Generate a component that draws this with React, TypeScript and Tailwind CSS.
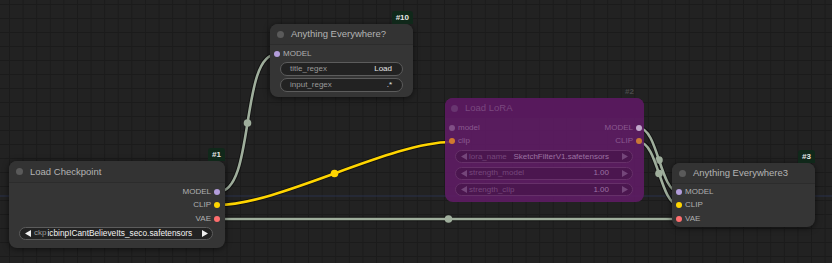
import React from 'react';

type Pt = [number, number];

const LINK = '#9fae9c';

// litegraph style spline: horizontal tangents, a quarter of the distance long
function spline(a: Pt, b: Pt) {
  const d = Math.hypot(b[0] - a[0], b[1] - a[1]) * 0.25;
  const c1: Pt = [a[0] + d, a[1]];
  const c2: Pt = [b[0] - d, b[1]];
  const mid: Pt = [
    (a[0] + 3 * c1[0] + 3 * c2[0] + b[0]) / 8,
    (a[1] + 3 * c1[1] + 3 * c2[1] + b[1]) / 8,
  ];
  return { d: `M${a[0]} ${a[1]} C${c1[0]} ${c1[1]} ${c2[0]} ${c2[1]} ${b[0]} ${b[1]}`, mid };
}

const links: { a: Pt; b: Pt; color: string }[] = [
  { a: [218, 192], b: [277, 54], color: LINK },
  { a: [218, 205], b: [451, 142], color: '#ffd500' },
  { a: [218, 219], b: [679, 219], color: LINK },
  { a: [639, 128], b: [679, 192], color: LINK },
  { a: [639, 142], b: [679, 205], color: LINK },
];

function Links() {
  return (
    <svg className="absolute inset-0" width={832} height={263}>
      <line x1={0} y1={196} x2={832} y2={196} stroke="#29304a" strokeWidth={1} />
      {links.map((l, i) => {
        const s = spline(l.a, l.b);
        return (
          <g key={i}>
            <path d={s.d} fill="none" stroke="rgba(0,0,0,0.45)" strokeWidth={4.5} />
            <path d={s.d} fill="none" stroke={l.color} strokeWidth={2.6} />
            <circle cx={s.mid[0]} cy={s.mid[1]} r={3.8} fill={l.color} />
          </g>
        );
      })}
    </svg>
  );
}

function Badge({ label }: { label: string }) {
  return (
    <div className="absolute right-0 bottom-full flex h-[13px] items-center rounded-t-[3px] bg-[#10281a] px-[4px] text-[8px] font-bold text-[#e6e6e6]">
      {label}
    </div>
  );
}

function Arrow({ dir, dim }: { dir: 'l' | 'r'; dim?: boolean }) {
  return (
    <svg width={6} height={7} viewBox="0 0 6 7" className="shrink-0">
      <polygon points={dir === 'l' ? '6,0 6,7 0,3.5' : '0,0 0,7 6,3.5'} fill={dim ? '#74467a' : '#f0f0f0'} />
    </svg>
  );
}

function Dot({ color }: { color: string }) {
  return <span className="h-[6px] w-[6px] shrink-0 rounded-full" style={{ backgroundColor: color }} />;
}

function TextWidget({ label, value }: { label: string; value: string }) {
  return (
    <div className="flex h-[14px] items-center justify-between rounded-full border border-[#5c5c5c] bg-[#222] pl-[9px] pr-[10px] text-[8px]">
      <span className="text-[#9a9a9a]">{label}</span>
      <span className="text-[#e4e4e4]">{value}</span>
    </div>
  );
}

function LoraWidget({ label, value }: { label: string; value: string }) {
  return (
    <div className="flex h-[13px] items-center rounded-full border border-[#663069] bg-[#4a164e]/90 pl-[5px] pr-[4px] text-[8px]">
      <Arrow dir="l" dim />
      <span className="ml-[2px] text-[#76477c]">{label}</span>
      <span className="ml-auto mr-[13px] text-[#9c72a2]">{value}</span>
      <Arrow dir="r" dim />
    </div>
  );
}

function LoadCheckpoint() {
  return (
    <div className="absolute left-[9px] top-[161px] h-[87px] w-[216px] rounded-[8px] bg-[#353535] shadow-[0_1px_6px_rgba(0,0,0,0.6)]">
      <Badge label="#1" />
      <div className="flex h-[22px] items-center gap-[7px] rounded-t-[8px] border-b border-[#2c2c2c] bg-[#333] pl-[7px]">
        <span className="h-[7px] w-[7px] rounded-full bg-[#5a5a5a]" />
        <span className="text-[9.5px] text-[#b4b4b4]">Load Checkpoint</span>
      </div>
      <div className="flex flex-col items-end pr-[5px] pt-[2px] text-[8px] text-[#b0b0b0]">
        <div className="flex h-[13.5px] items-center gap-[3px]">
          MODEL <Dot color="#b39ddb" />
        </div>
        <div className="flex h-[13.5px] items-center gap-[3px]">
          CLIP <Dot color="#ffd500" />
        </div>
        <div className="flex h-[13.5px] items-center gap-[3px]">
          VAE <Dot color="#ff6e6e" />
        </div>
      </div>
      <div className="ml-[10px] mr-[12px] mt-[1px] flex h-[13px] items-center rounded-full border border-[#5c5c5c] bg-[#222] pl-[5px] pr-[4px] text-[8px]">
        <Arrow dir="l" />
        <span className="ml-[3px] text-[#9a9a9a]">ckp</span>
        <span className="ml-[1px] text-[8.3px] text-[#f2f2f2]">icbinpICantBelieveIts_seco.safetensors</span>
        <span className="flex-1" />
        <Arrow dir="r" />
      </div>
    </div>
  );
}

function AnythingEverywhereQ() {
  return (
    <div className="absolute left-[270px] top-[24px] h-[73px] w-[143px] rounded-[8px] bg-[#353535] shadow-[0_1px_6px_rgba(0,0,0,0.6)]">
      <Badge label="#10" />
      <div className="flex h-[21px] items-center gap-[7px] rounded-t-[8px] border-b border-[#2c2c2c] bg-[#333] pl-[7px]">
        <span className="h-[7px] w-[7px] rounded-full bg-[#5a5a5a]" />
        <span className="text-[9.5px] text-[#b4b4b4]">Anything Everywhere?</span>
      </div>
      <div className="flex flex-col pl-[4px] pt-[2px] text-[8px] text-[#b0b0b0]">
        <div className="flex h-[13.5px] items-center gap-[3px]">
          <Dot color="#b39ddb" /> MODEL
        </div>
      </div>
      <div className="mx-[10px] mt-[1.5px] flex flex-col gap-[2px]">
        <TextWidget label="title_regex" value="Load" />
        <TextWidget label="input_regex" value=".*" />
      </div>
    </div>
  );
}

function LoadLora() {
  return (
    <div className="absolute left-[445px] top-[98px] h-[104px] w-[199px] rounded-[8px] bg-[rgba(94,28,100,0.9)]">
      <div className="absolute right-[10px] bottom-full pb-[2px] text-[8px] font-bold text-[#4a4a4a]">#2</div>
      <div className="flex h-[20px] items-center gap-[7px] rounded-t-[8px] bg-[rgba(88,26,92,0.9)] pl-[6px]">
        <span className="h-[7px] w-[7px] rounded-full bg-[#683570]" />
        <span className="text-[9.5px] text-[#7a487f]">Load LoRA</span>
      </div>
      <div className="flex flex-col pl-[4px] pr-[2px] pt-[3px] text-[8px] text-[#8a5a90]">
        <div className="flex h-[13.5px] items-center justify-between">
          <span className="flex items-center gap-[3px]">
            <Dot color="#804f86" /> model
          </span>
          <span className="flex items-center gap-[3px]">
            MODEL <Dot color="#c2a9cc" />
          </span>
        </div>
        <div className="flex h-[13.5px] items-center justify-between">
          <span className="flex items-center gap-[3px]">
            <Dot color="#d07a2e" /> clip
          </span>
          <span className="flex items-center gap-[3px]">
            CLIP <Dot color="#c97936" />
          </span>
        </div>
      </div>
      <div className="ml-[10px] mr-[11px] mt-[2px] flex flex-col gap-[3.5px]">
        <LoraWidget label="lora_name" value="SketchFilterV1.safetensors" />
        <LoraWidget label="strength_model" value="1.00" />
        <LoraWidget label="strength_clip" value="1.00" />
      </div>
    </div>
  );
}

function AnythingEverywhere3() {
  return (
    <div className="absolute left-[672px] top-[163px] h-[64px] w-[143px] rounded-[8px] bg-[#353535] shadow-[0_1px_6px_rgba(0,0,0,0.6)]">
      <Badge label="#3" />
      <div className="flex h-[21px] items-center gap-[7px] rounded-t-[8px] border-b border-[#2c2c2c] bg-[#333] pl-[7px]">
        <span className="h-[7px] w-[7px] rounded-full bg-[#5a5a5a]" />
        <span className="text-[9.5px] text-[#b4b4b4]">Anything Everywhere3</span>
      </div>
      <div className="flex flex-col pl-[4px] pt-[1px] text-[8px] text-[#b0b0b0]">
        <div className="flex h-[13.5px] items-center gap-[3px]">
          <Dot color="#b39ddb" /> MODEL
        </div>
        <div className="flex h-[13.5px] items-center gap-[3px]">
          <Dot color="#ffd500" /> CLIP
        </div>
        <div className="flex h-[13.5px] items-center gap-[3px]">
          <Dot color="#ff6e6e" /> VAE
        </div>
      </div>
    </div>
  );
}

export default function App() {
  return (
    <div className="relative h-[263px] w-[832px] overflow-hidden bg-[#222] bg-[linear-gradient(to_right,#1b1b1b_1px,transparent_1px),linear-gradient(to_bottom,#1b1b1b_1px,transparent_1px)] bg-[size:13.6px_14px] bg-[position:9px_4px] font-['Liberation_Sans',Arial,sans-serif] leading-none">
      <Links />
      <LoadCheckpoint />
      <AnythingEverywhereQ />
      <LoadLora />
      <AnythingEverywhere3 />
    </div>
  );
}
